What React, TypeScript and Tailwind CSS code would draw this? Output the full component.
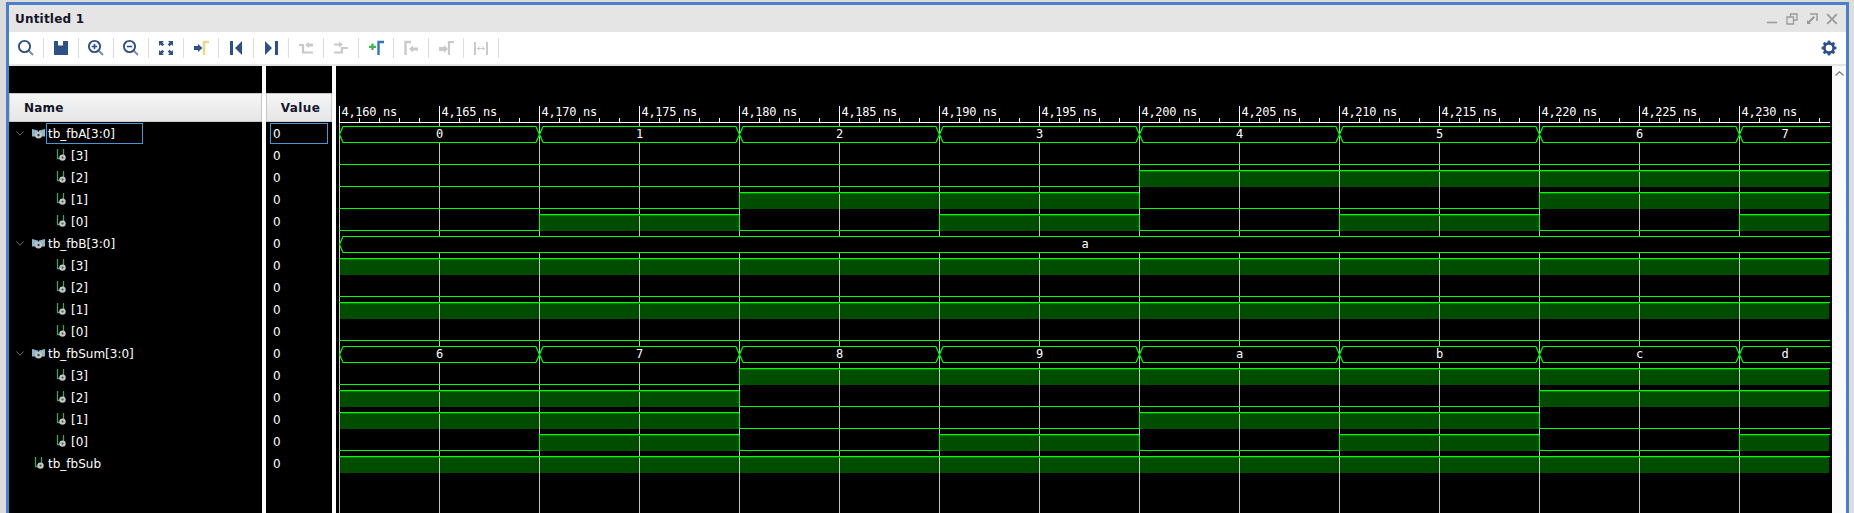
import React from "react";

const NAVY = "#2f4f87";
const GRAY = "#c9c9c9";

const bounds = [339, 539, 739, 939, 1139, 1339, 1539, 1739, 1830];

type Row =
  | { kind: "bus"; label: string; values: string[] }
  | { kind: "bit"; label: string; levels: number[]; top?: boolean };

const A = [0, 1, 2, 3, 4, 5, 6, 7];
const B = A.map(() => 10);
const S = A.map((n) => n + 6);
const bitsOf = (arr: number[], b: number) => arr.map((n) => (n >> b) & 1);

const rows: Row[] = [
  { kind: "bus", label: "tb_fbA[3:0]", values: A.map((n) => n.toString(16)) },
  { kind: "bit", label: "[3]", levels: bitsOf(A, 3) },
  { kind: "bit", label: "[2]", levels: bitsOf(A, 2) },
  { kind: "bit", label: "[1]", levels: bitsOf(A, 1) },
  { kind: "bit", label: "[0]", levels: bitsOf(A, 0) },
  { kind: "bus", label: "tb_fbB[3:0]", values: ["a"] },
  { kind: "bit", label: "[3]", levels: bitsOf(B, 3) },
  { kind: "bit", label: "[2]", levels: bitsOf(B, 2) },
  { kind: "bit", label: "[1]", levels: bitsOf(B, 1) },
  { kind: "bit", label: "[0]", levels: bitsOf(B, 0) },
  { kind: "bus", label: "tb_fbSum[3:0]", values: S.map((n) => n.toString(16)) },
  { kind: "bit", label: "[3]", levels: bitsOf(S, 3) },
  { kind: "bit", label: "[2]", levels: bitsOf(S, 2) },
  { kind: "bit", label: "[1]", levels: bitsOf(S, 1) },
  { kind: "bit", label: "[0]", levels: bitsOf(S, 0) },
  { kind: "bit", label: "tb_fbSub", levels: A.map(() => 1), top: true },
];

function Icon({ children }: { children: React.ReactNode }) {
  return (
    <svg width="20" height="20" viewBox="0 0 20 20" fill="none">
      {children}
    </svg>
  );
}

function Magnifier({ mark }: { mark?: "plus" | "minus" }) {
  return (
    <Icon>
      <path d="M12.5 12.5L17 17" stroke="#7f8ba3" strokeWidth="2" />
      <circle cx="8.5" cy="8.5" r="5.6" stroke={NAVY} strokeWidth="1.9" />
      {mark && <path d="M5.8 8.5H11.2" stroke={NAVY} strokeWidth="1.6" />}
      {mark === "plus" && <path d="M8.5 5.8V11.2" stroke={NAVY} strokeWidth="1.6" />}
    </Icon>
  );
}

const toolbar: React.ReactNode[] = [
  <Magnifier key="a" />,
  <Icon key="b">
    <path d="M3 3H7V7.5H12V3H14V3H17V17H3Z" fill={NAVY} />
  </Icon>,
  <Magnifier key="c" mark="plus" />,
  <Magnifier key="d" mark="minus" />,
  <Icon key="e">
    <path
      d="M3 3H8L6.4 4.6L8.2 6.4L6.4 8.2L4.6 6.4L3 8ZM17 3V8L15.4 6.4L13.6 8.2L11.8 6.4L13.6 4.6L12 3ZM3 17V12L4.6 13.6L6.4 11.8L8.2 13.6L6.4 15.4L8 17ZM17 17H12L13.6 15.4L11.8 13.6L13.6 11.8L15.4 13.6L17 12Z"
      fill={NAVY}
    />
  </Icon>,
  <Icon key="f">
    <path d="M3 8H7V6L11.5 10L7 14V12H3Z" fill={NAVY} />
    <path d="M13 17V4H18" stroke="#e8d98c" strokeWidth="2.6" />
  </Icon>,
  <Icon key="g">
    <path d="M4 3H7V17H4ZM16 3V17L9 10Z" fill={NAVY} />
  </Icon>,
  <Icon key="h">
    <path d="M4 3L11 10L4 17ZM14 3H17V17H14Z" fill={NAVY} />
  </Icon>,
  <Icon key="i">
    <path d="M3 7H7V14.5H17" stroke={GRAY} strokeWidth="2.2" />
    <path d="M9 7L13 4V5.5H17V8.5H13V10Z" fill={GRAY} />
  </Icon>,
  <Icon key="j">
    <path d="M3 14.5H11V10H17" stroke={GRAY} strokeWidth="2.2" />
    <path d="M3 5.5H8V3.5L12 6.5L8 9.5V7.5H3Z" fill={GRAY} />
  </Icon>,
  <Icon key="k">
    <path d="M3 8.8H10M6.5 5.5V12" stroke="#45b34f" strokeWidth="2.3" />
    <path d="M12.5 17V4H18" stroke="#2b78b4" strokeWidth="2.4" />
  </Icon>,
  <Icon key="l">
    <path d="M4.5 17V4H10" stroke={GRAY} strokeWidth="2.4" />
    <path d="M8 11L12 7.5V9.5H17V12.5H12V14.5Z" fill={GRAY} />
  </Icon>,
  <Icon key="m">
    <path d="M3 9H8V7L12 11L8 15V13H3Z" fill={GRAY} />
    <path d="M13 17V4H18" stroke={GRAY} strokeWidth="2.2" />
  </Icon>,
  <Icon key="n">
    <path d="M4 4V17M16 4V17" stroke={GRAY} strokeWidth="2" />
    <path d="M6 10.5H14M6.5 10.5L8.5 8.5M6.5 10.5L8.5 12.5M13.5 10.5L11.5 8.5M13.5 10.5L11.5 12.5" stroke={GRAY} strokeWidth="1" />
  </Icon>,
];

function Gear() {
  return (
    <svg width="16" height="16" viewBox="0 0 16 16" fill="none">
      <circle cx="8" cy="8" r="4.6" stroke={NAVY} strokeWidth="2.6" />
      {[0, 45, 90, 135, 180, 225, 270, 315].map((a) => (
        <rect key={a} x="6.6" y="0.6" width="2.8" height="3" fill={NAVY} transform={`rotate(${a} 8 8)`} />
      ))}
    </svg>
  );
}

function BusIcon() {
  return (
    <svg width="13" height="11" viewBox="0 0 13 11" fill="none" className="shrink-0">
      <path d="M0 1L6 2.5V8.5H0ZM13 1L7 2.5V8.5H13Z" fill="#8db6cc" />
      <circle cx="6.5" cy="7" r="3.5" fill="#c4c4c4" />
      <circle cx="6.5" cy="7" r="1.2" fill="#444" />
    </svg>
  );
}

function BitIcon() {
  return (
    <svg width="11" height="12" viewBox="0 0 11 12" fill="none" className="shrink-0">
      <path d="M1.5 0V9.5H4M7.5 0V6" stroke="#3fa45a" strokeWidth="1.3" />
      <circle cx="6.5" cy="8.6" r="3.2" fill="#c8c8c8" />
      <circle cx="6.5" cy="8.6" r="1.1" fill="#555" />
    </svg>
  );
}

function Chevron() {
  return (
    <svg width="8" height="5" viewBox="0 0 8 5" fill="none">
      <path d="M0.3 0.5L4 4.2L7.7 0.5" stroke="#6f6f6f" strokeWidth="1" />
    </svg>
  );
}

function WindowControls() {
  const c = "#9a9a9a";
  return (
    <div className="flex items-center pr-[4px]">
      <div className="flex w-[20px] justify-center">
        <svg width="12" height="12" viewBox="0 0 12 12" fill="none">
          <path d="M1 9.5H11" stroke={c} strokeWidth="1.6" />
        </svg>
      </div>
      <div className="flex w-[20px] justify-center">
        <svg width="12" height="12" viewBox="0 0 12 12" fill="none">
          <path d="M4.5 3.5V1H11V7H8M1 4H7.5V11H1Z" stroke={c} strokeWidth="1.3" />
        </svg>
      </div>
      <div className="flex w-[20px] justify-center">
        <svg width="12" height="12" viewBox="0 0 12 12" fill="none">
          <path d="M4 1H11V8" stroke={c} strokeWidth="1.5" />
          <path d="M1 7V11H5L3.8 9.8L9 4.5L7.5 3L2.3 8.3Z" fill={c} />
        </svg>
      </div>
      <div className="flex w-[20px] justify-center">
        <svg width="12" height="12" viewBox="0 0 12 12" fill="none">
          <path d="M1.2 1.2L10.8 10.8M10.8 1.2L1.2 10.8" stroke={c} strokeWidth="1.8" />
        </svg>
      </div>
    </div>
  );
}

const G = "#00ff00";

function BusWave({ i, values }: { i: number; values: string[] }) {
  const top = 126.5 + 22 * i;
  const bot = 142.5 + 22 * i;
  const mid = (top + bot) / 2;
  const edges = values.length === 1 ? [339, 1830] : bounds;
  let d = "";
  let diag = `M343 ${top}L339.5 ${mid}L343 ${bot}`;
  const blocks: React.ReactNode[] = [];
  for (let k = 0; k < values.length; k++) {
    const a = edges[k] + 4;
    const last = k === values.length - 1;
    const b = last ? 1830 : edges[k + 1] - 3;
    blocks.push(<rect key={k} x={a} y={top} width={b - a} height={16} fill="#000" />);
    d += `M${a} ${top}H${b}M${a} ${bot}H${b}`;
    if (!last) {
      const t = edges[k + 1] + 0.5;
      diag += `M${t - 3.5} ${top}L${t + 3.5} ${bot}M${t - 3.5} ${bot}L${t + 3.5} ${top}`;
    }
  }
  return (
    <>
      {blocks}
      <path d={diag} stroke={G} strokeWidth="1.2" fill="none" />
      <path d={d} stroke={G} strokeWidth="1" fill="none" shapeRendering="crispEdges" />
      {values.map((v, k) => (
        <text
          key={k}
          x={(edges[k] + edges[k + 1]) / 2 + 0.5}
          y={138 + 22 * i}
          textAnchor="middle"
          fill="#fff"
          fontSize="12"
        >
          {v}
        </text>
      ))}
    </>
  );
}

function bitFill(i: number, levels: number[]) {
  const low = 142 + 22 * i;
  return levels.map((l, k) =>
    l ? (
      <rect key={k} x={bounds[k]} y={low - 16} width={Math.min(bounds[k + 1], 1829) - bounds[k]} height={17} fill="#004d00" />
    ) : null
  );
}

function bitLine(i: number, levels: number[]) {
  const low = 142.5 + 22 * i;
  const high = low - 16;
  let d = "";
  let dim = "";
  levels.forEach((l, k) => {
    const y = l ? high : low;
    d += `M${bounds[k]} ${y}H${bounds[k + 1]}`;
    if (l) dim += `M${bounds[k] + 1} ${high + 1}H${Math.min(bounds[k + 1], 1829)}`;
    if (k > 0 && levels[k - 1] !== l) d += `M${bounds[k] + 0.5} ${high}V${low}`;
  });
  return (
    <>
      {dim && <path d={dim} stroke="#067a06" strokeWidth="1" shapeRendering="crispEdges" />}
      <path d={d} stroke={G} strokeWidth="1" fill="none" shapeRendering="crispEdges" />
    </>
  );
}

function Waves() {
  const majors = Array.from({ length: 15 }, (_, k) => 339 + 100 * k);
  const minors = Array.from({ length: 75 }, (_, k) => 339 + 20 * k).filter((x) => (x - 339) % 100 !== 0 && x < 1830);
  return (
    <svg
      width="1496"
      height="447"
      viewBox="336 66 1496 447"
      className="block bg-black font-['DejaVu_Sans_Mono',monospace]"
    >
      {rows.map((r, i) => (r.kind === "bit" ? <g key={i}>{bitFill(i, r.levels)}</g> : null))}
      {majors.map((x) => (
        <path key={x} d={`M${x + 0.5} 123V513`} stroke="#c4c4c4" strokeWidth="1" shapeRendering="crispEdges" />
      ))}
      {rows.map((r, i) =>
        r.kind === "bit" ? <g key={i}>{bitLine(i, r.levels)}</g> : <BusWave key={i} i={i} values={r.values} />
      )}
      <path d="M339 122.5H1830" stroke="#fff" strokeWidth="1" shapeRendering="crispEdges" />
      {majors.map((x) => (
        <path key={x} d={`M${x + 0.5} 106V122`} stroke="#fff" strokeWidth="1" shapeRendering="crispEdges" />
      ))}
      {minors.map((x) => (
        <path key={x} d={`M${x + 0.5} 118V122`} stroke="#fff" strokeWidth="1" shapeRendering="crispEdges" />
      ))}
      {majors.map((x, k) => (
        <text key={x} x={x + 2.5} y={116} fill="#fff" fontSize="12" letterSpacing="-0.3">
          {`4,${160 + 5 * k} ns`}
        </text>
      ))}
    </svg>
  );
}

export default function App() {
  return (
    <div className="flex h-[513px] w-[1854px] flex-col overflow-hidden bg-[#dcdcdc] pt-[2px] pr-[5px] pl-[6px] font-['DejaVu_Sans',sans-serif] text-[12px]">
      <div className="flex min-h-0 flex-1 flex-col border-x-[3px] border-t-[3px] border-b-0 border-[#4d7fc9] bg-white">
        <div className="flex h-[27px] items-center justify-between bg-[#e5e5e5] pl-[6px]">
          <span className="font-bold tracking-[0.2px] text-[#14142b]">Untitled 1</span>
          <WindowControls />
        </div>
        <div className="flex h-[32px] items-center justify-between bg-white pr-[9px]">
          <div className="flex items-center">
            {toolbar.map((ic, i) => (
              <div key={i} className="flex h-[20px] w-[35px] items-center justify-center border-r border-[#dcdcdc]">
                {ic}
              </div>
            ))}
          </div>
          <Gear />
        </div>
        <div className="h-[2px] bg-[#e5e5e5]" />
        <div className="flex min-h-0 flex-1 bg-white">
          <div className="w-[253px] bg-black">
            <div className="h-[27px]" />
            <div className="flex h-[29px] items-center border border-[#c8c8c8] bg-gradient-to-b from-[#f5f5f5] to-[#e6e6e6] pl-[14px] font-bold tracking-[0.2px] text-[#14142b]">
              Name
            </div>
            {rows.map((r, i) => (
              <div key={i} className="flex h-[22px] items-center text-white">
                {r.kind === "bus" ? (
                  <>
                    <div className="ml-[7px] flex w-[8px]">
                      <Chevron />
                    </div>
                    <div className="ml-[8px] flex w-[12px]">
                      <BusIcon />
                    </div>
                    <div className={`ml-[2px] flex h-[21px] items-center border px-[1px] pt-[2px] ${i === 0 ? "w-[97px] border-[#4a94d0]" : "border-transparent"}`}>
                      {r.label}
                    </div>
                  </>
                ) : r.top ? (
                  <>
                    <div className="ml-[25px] flex w-[10px]">
                      <BitIcon />
                    </div>
                    <div className="ml-[4px] pt-[2px]">{r.label}</div>
                  </>
                ) : (
                  <>
                    <div className="ml-[47px] flex w-[10px]">
                      <BitIcon />
                    </div>
                    <div className="ml-[5px] pt-[2px]">{r.label}</div>
                  </>
                )}
              </div>
            ))}
          </div>
          <div className="w-[4px]" />
          <div className="w-[66px] bg-black">
            <div className="h-[27px]" />
            <div className="flex h-[29px] items-center justify-center border border-[#c8c8c8] bg-gradient-to-b from-[#f5f5f5] to-[#e6e6e6] pl-[3px] font-bold tracking-[0.4px] text-[#14142b]">
              Value
            </div>
            {rows.map((r, i) => (
              <div key={i} className="flex h-[22px] items-center pl-[4px] text-white">
                <div className={`flex h-[21px] w-[58px] items-center border pt-[2px] pl-[2px] ${i === 0 ? "border-[#4a94d0]" : "border-transparent"}`}>
                  0
                </div>
              </div>
            ))}
          </div>
          <div className="w-[4px]" />
          <div className="w-[1496px]">
            <Waves />
          </div>
          <div className="flex flex-1 justify-center bg-[#fafafa] pt-[5px]">
            <svg width="9" height="5" viewBox="0 0 9 5" fill="none">
              <path d="M0.5 4.5L4.5 0.8L8.5 4.5" stroke="#777" strokeWidth="1.2" />
            </svg>
          </div>
        </div>
      </div>
    </div>
  );
}
